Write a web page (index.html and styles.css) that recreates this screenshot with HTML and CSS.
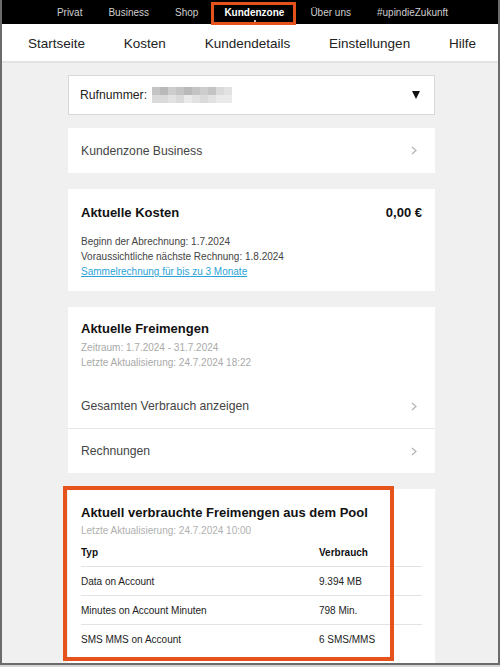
FILE: index.html
```html
<!DOCTYPE html>
<html lang="de">
<head>
<meta charset="utf-8">
<title>Kundenzone</title>
<link rel="stylesheet" href="styles.css">
</head>
<body>
<div class="frame">
  <nav class="topbar">
    <a href="#">Privat</a>
    <a href="#">Business</a>
    <a href="#">Shop</a>
    <a href="#" class="active">Kundenzone<span class="dot"></span><span class="hl-top"></span></a>
    <a href="#">Über uns</a>
    <a href="#">#upindieZukunft</a>
  </nav>
  <nav class="subnav">
    <a href="#">Startseite</a>
    <a href="#">Kosten</a>
    <a href="#">Kundendetails</a>
    <a href="#">Einstellungen</a>
    <a href="#">Hilfe</a>
  </nav>

  <main class="content">
    <div class="dropdown">
      <span class="dd-label">Rufnummer:</span>
      <span class="mosaic">
        <i class="m2"></i><i class="m1"></i><i class="m3"></i><i class="m2"></i><i class="m1"></i><i class="m2"></i><i class="m3"></i><i class="m2"></i><i class="m4"></i><i class="m5"></i>
        <i class="m4"></i><i class="m4"></i><i class="m5"></i><i class="m4"></i><i class="m6"></i><i class="m5"></i><i class="m4"></i><i class="m5"></i><i class="m6"></i><i class="m6"></i>
      </span>
      <span class="caret"></span>
    </div>

    <a class="card link-row" href="#">
      <span>Kundenzone Business</span>
      <svg class="chev" width="6" height="9" viewBox="0 0 6 9"><polyline points="1,1 5,4.5 1,8" fill="none" stroke="#b0b0b0" stroke-width="1.1"/></svg>
    </a>

    <section class="card costs">
      <div class="costs-head">
        <h2>Aktuelle Kosten</h2>
        <span class="amount">0,00 €</span>
      </div>
      <div class="costs-details">
        <p>Beginn der Abrechnung: 1.7.2024</p>
        <p>Voraussichtliche nächste Rechnung: 1.8.2024</p>
        <p><a href="#" class="blue-link">Sammelrechnung für bis zu 3 Monate</a></p>
      </div>
    </section>

    <section class="card free">
      <div class="free-head">
        <h2>Aktuelle Freimengen</h2>
        <p class="muted first">Zeitraum: 1.7.2024 - 31.7.2024</p>
        <p class="muted">Letzte Aktualisierung: 24.7.2024 18:22</p>
      </div>
      <a class="link-row" href="#">
        <span>Gesamten Verbrauch anzeigen</span>
        <svg class="chev" width="6" height="9" viewBox="0 0 6 9"><polyline points="1,1 5,4.5 1,8" fill="none" stroke="#b0b0b0" stroke-width="1.1"/></svg>
      </a>
      <a class="link-row divided" href="#">
        <span>Rechnungen</span>
        <svg class="chev" width="6" height="9" viewBox="0 0 6 9"><polyline points="1,1 5,4.5 1,8" fill="none" stroke="#b0b0b0" stroke-width="1.1"/></svg>
      </a>
    </section>

    <section class="card pool">
      <span class="hl-pool"></span>
      <h2>Aktuell verbrauchte Freimengen aus dem Pool</h2>
      <p class="muted first">Letzte Aktualisierung: 24.7.2024 10:00</p>
      <div class="table">
        <div class="tr th"><span>Typ</span><span>Verbrauch</span></div>
        <div class="tr"><span>Data on Account</span><span>9.394 MB</span></div>
        <div class="tr"><span>Minutes on Account Minuten</span><span>798 Min.</span></div>
        <div class="tr"><span>SMS MMS on Account</span><span>6 SMS/MMS</span></div>
      </div>
    </section>
  </main>
</div>
</body>
</html>
```

FILE: styles.css
```css
* { box-sizing: border-box; }

body {
  margin: 0;
  background: #d6d6d6;
  font-family: "Liberation Sans", Arial, sans-serif;
}

.frame {
  width: 500px;
  height: 665px;
  border: 2px solid #6b6b6b;
  border-top: 0;
  background: #f0f0f0;
  overflow: hidden;
}

/* top black bar */
.topbar {
  height: 24px;
  padding-top: 2px;
  background: #000;
  display: flex;
  justify-content: center;
  gap: 26px;
  padding-left: 5px;
}
.topbar a {
  position: relative;
  font-size: 10px;
  line-height: 22px;
  color: #cfcfcf;
  text-decoration: none;
}
.topbar a.active {
  color: #fff;
  font-weight: bold;
}
.topbar .dot {
  position: absolute;
  left: 30px;
  top: 18px;
  width: 2px;
  height: 2px;
  background: #bbb;
}
.hl-top {
  position: absolute;
  left: -13px;
  right: -12px;
  top: 0;
  bottom: -1px;
  border: 3px solid #e5521b;
}

/* secondary navigation */
.subnav {
  height: 39px;
  padding-top: 1px;
  background: #fff;
  border-bottom: 2px solid #e3e3e3;
  display: flex;
  justify-content: space-between;
  align-items: center;
  padding-left: 26px;
  padding-right: 22px;
}
.subnav a {
  font-size: 13.5px;
  color: #222;
  text-decoration: none;
}

/* content */
.content {
  width: 367px;
  margin-left: 66px;
  padding-top: 12px;
  display: flex;
  flex-direction: column;
  gap: 16px;
}

.card {
  background: #fff;
}

h2 {
  margin: 0;
  font-size: 13px;
  line-height: 16px;
  font-weight: bold;
  color: #111;
}
p { margin: 0; }

.dropdown {
  height: 40px;
  margin-bottom: -3px;
  border: 1px solid #d8d8d8;
  background: #fff;
  display: flex;
  align-items: center;
  padding: 0 14px 0 11px;
  font-size: 12.2px;
  color: #222;
}
.mosaic {
  margin-left: 5px;
  display: grid;
  grid-template-columns: repeat(10, 8px);
  grid-auto-rows: 8px;
}
.mosaic i { display: block; }
.m1 { background: #b9b9b9; }
.m2 { background: #c4c4c4; }
.m3 { background: #cdcdcd; }
.m4 { background: #dadada; }
.m5 { background: #e2e2e2; }
.m6 { background: #eaeaea; }
.caret {
  margin-left: auto;
  width: 0;
  height: 0;
  border-left: 4.5px solid transparent;
  border-right: 4.5px solid transparent;
  border-top: 8px solid #111;
}

.link-row {
  height: 45px;
  padding: 0 18px 0 13px;
  display: flex;
  align-items: center;
  justify-content: space-between;
  font-size: 12.2px;
  color: #444;
  text-decoration: none;
  background: #fff;
}
.chev { display: block; }

/* Aktuelle Kosten */
.costs {
  padding: 16px 13px 12px;
}
.costs-head {
  display: flex;
  justify-content: space-between;
  align-items: center;
}
.amount {
  font-size: 13px;
  line-height: 16px;
  font-weight: bold;
  color: #111;
}
.costs-details {
  margin-top: 13px;
  font-size: 10px;
  line-height: 15px;
  color: #444;
}
.blue-link {
  color: #2ba3d8;
  text-decoration: underline;
}

/* Aktuelle Freimengen */
.free-head {
  padding: 14px 13px 14px;
}
.muted {
  font-size: 10px;
  line-height: 15px;
  color: #a9a9a9;
}
.muted.first { margin-top: 3px; }
.free .link-row { height: 44px; }
.free .link-row.divided {
  height: 45px;
  border-top: 1px solid #e6e6e6;
}

/* Pool */
.pool {
  position: relative;
  padding: 16px 13px 0;
  height: 220px;
}
.pool .muted { line-height: 14px; color: #b0b0b0; }
.hl-pool {
  position: absolute;
  left: -5px;
  top: -3px;
  width: 331px;
  height: 175px;
  border: 4px solid #e5521b;
}
.table {
  font-size: 10px;
  color: #222;
}
.tr {
  display: grid;
  grid-template-columns: 238px 1fr;
  align-items: center;
  height: 29px;
  border-bottom: 1px solid #e3e3e3;
}
.tr.th {
  font-weight: bold;
  color: #111;
}
.tr:last-child { border-bottom: 0; }
```
